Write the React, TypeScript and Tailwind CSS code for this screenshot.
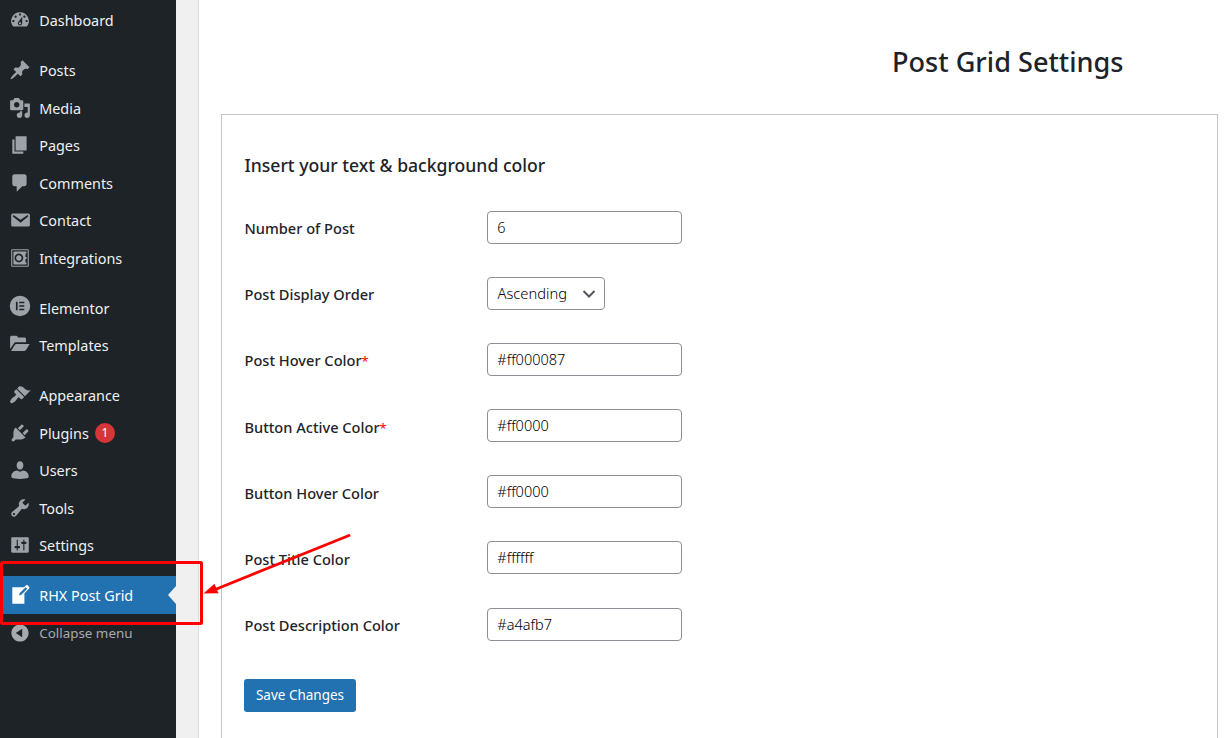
import React from "react";

type IconProps = { d: string };

function Dashicon({ d }: IconProps) {
  return (
    <svg viewBox="0 0 20 20" className="block size-[22px] shrink-0" fill="currentColor" fillRule="evenodd" aria-hidden="true">
      <path d={d} />
    </svg>
  );
}

const ICONS = {
  dashboard:
    "M3.76 16h12.48A7.998 7.998 0 0 0 10 3a7.998 7.998 0 0 0-6.24 13zM10 4c.55 0 1 .45 1 1s-.45 1-1 1-1-.45-1-1 .45-1 1-1zM6 6c.55 0 1 .45 1 1s-.45 1-1 1-1-.45-1-1 .45-1 1-1zm8 0c.55 0 1 .45 1 1s-.45 1-1 1-1-.45-1-1 .45-1 1-1zm-5.370 5.550L12 7v6c0 1.100-.900 2-2 2s-2-.900-2-2c0-.570.240-1.080.630-1.450zM4 10c.550 0 1 .450 1 1s-.450 1-1 1-1-.450-1-1 .450-1 1-1zm12 0c.550 0 1 .450 1 1s-.450 1-1 1-1-.450-1-1 .450-1 1-1zm-5 3c0-.550-.450-1-1-1s-1 .450-1 1 .450 1 1 1 1-.450 1-1z",
  post: "M10.440 3.020l1.820-1.820 6.360 6.350-1.830 1.820c-1.050-.680-2.480-.570-3.410.360l-.750.750c-.920.930-1.040 2.350-.350 3.410l-1.830 1.820-2.410-2.410-2.800 2.790c-.420.420-3.380 2.710-3.800 2.290s1.860-3.390 2.280-3.810l2.790-2.790L4.100 9.360l1.830-1.820c1.050.690 2.480.570 3.400-.360l.750-.750c.930-.920 1.050-2.350.360-3.410z",
  media:
    "M13 11V4c0-.55-.45-1-1-1h-1.670L9 1H5L3.670 3H2c-.55 0-1 .45-1 1v7c0 .55.45 1 1 1h10c.55 0 1-.45 1-1zM7 4.500c1.380 0 2.500 1.120 2.500 2.500S8.380 9.500 7 9.500 4.500 8.380 4.500 7 5.620 4.500 7 4.500zM14 6h5v10.500c0 1.380-1.120 2.500-2.500 2.500S14 17.880 14 16.500s1.120-2.500 2.500-2.500c.17 0 .34.020.5.050V9h-3V6zm-4 8.050V13h2v3.500c0 1.380-1.120 2.500-2.500 2.500S7 17.880 7 16.500 8.120 14 9.500 14c.17 0 .34.020.5.050z",
  page: "M6 15V2h10v13H6zm-1 1h8v2H3V5h2v11z",
  comments: "M5 2h9c1.100 0 2 .9 2 2v7c0 1.100-.9 2-2 2h-2l-5 5v-5H5c-1.100 0-2-.9-2-2V4c0-1.100.9-2 2-2z",
  email:
    "M3.870 4h13.250C18.370 4 19 4.590 19 5.790v8.420c0 1.190-.63 1.790-1.880 1.790H3.870c-1.250 0-1.880-.6-1.880-1.790V5.790c0-1.200.63-1.790 1.880-1.790zm6.620 8.600l6.740-5.530c.24-.2.43-.66.13-1.070-.29-.41-.82-.42-1.170-.17l-5.700 3.860L4.800 5.830c-.35-.25-.88-.24-1.170.17-.3.41-.11.870.13 1.070z",
  vault:
    "M18 17V3c0-.55-.45-1-1-1H3c-.55 0-1 .45-1 1v14c0 .55.45 1 1 1h14c.55 0 1-.45 1-1zm-1 0H3V3h14v14zM4.750 4h10.500c.41 0 .75.34.75.75V6h-1v3h1v2h-1v3h1v1.250c0 .41-.34.75-.75.75H4.750c-.41 0-.75-.34-.75-.75V4.750c0-.41.34-.75.75-.75zM13 10c0-2.210-1.790-4-4-4s-4 1.790-4 4 1.790 4 4 4 4-1.790 4-4zm-4-2.500c1.380 0 2.500 1.120 2.500 2.500S10.380 12.500 9 12.500 6.500 11.380 6.500 10 7.620 7.500 9 7.500z",
  elementor:
    "M10 .7a9.300 9.300 0 1 0 0 18.600A9.300 9.300 0 0 0 10 .7zM6.300 6.100h1.500v7.800H6.300zM9.300 6.100h4.600v1.500H9.300zM9.300 9.250h4.600v1.500H9.300zM9.300 12.400h4.600v1.500H9.300z",
  folder:
    "M1 14.600V4c0-.9.600-1.500 1.500-1.500h4c.6 0 1 .3 1.300.8l.5.900h5.500c1 0 1.700.6 1.700 1.600v2.700H6.600c-1 0-1.800.4-2.300 1.300zM1.900 16.300l3.300-5.300c.4-.6.900-.9 1.600-.9h12l-3 5c-.5.800-1.100 1.200-2 1.200z",
  appearance:
    "M14.480 11.060L7.410 3.990l1.500-1.500c.5-.56 2.300-.47 3.510.32 1.210.8 1.430 1.280 2.910 2.100 1.180.64 2.450 1.260 4.450.85zm-.71.71L6.700 4.700 4.930 6.470c-.39.39-.39 1.020 0 1.410l1.060 1.060c.39.39.39 1.030 0 1.420-.6.6-1.430 1.110-2.210 1.690-.35.26-.7.53-1.010.84C1.430 14.230.4 16.080 1.400 17.070c.99 1 2.840-.03 4.180-1.360.31-.31.58-.66.85-1.020.57-.78 1.080-1.610 1.690-2.210.39-.39 1.020-.39 1.410 0l1.060 1.060c.39.39 1.020.39 1.410 0z",
  plugins:
    "M13.110 4.360L9.870 7.600 8 5.730l3.240-3.240c.35-.34 1.050-.2 1.560.32.52.51.66 1.210.31 1.550zm-8 1.770l.91-1.120 9.010 9.010-1.190.84c-.71.71-2.630 1.160-3.820 1.160H6.140L4.900 17.260c-.59.59-1.540.59-2.120 0-.59-.58-.59-1.530 0-2.120l1.240-1.240v-3.880c0-1.130.4-3.190 1.090-3.890zm7.260 3.970l3.240-3.240c.34-.35 1.040-.21 1.550.31.52.51.66 1.210.31 1.550l-3.240 3.250z",
  users:
    "M10 9.600c-2.270 0-3-2.300-3.050-3.700C6.900 3.700 8.100 2 10 2s3.100 1.700 3.050 3.900C13 7.300 12.270 9.600 10 9.600zm0 2.100l2.600-1.300c2.900.3 5.200 2.400 5.200 4.600v1.900c-1.700.9-4.700 1.300-7.800 1.300s-6.100-.4-7.800-1.300V15c0-2.200 2.300-4.300 5.200-4.600z",
  tools:
    "M16.680 9.770c-1.340 1.340-3.300 1.670-4.950.99l-5.410 6.520c-.99.99-2.590.99-3.580 0s-.99-2.590 0-3.570l6.520-5.420c-.68-1.650-.35-3.610.99-4.950 1.280-1.280 3.120-1.620 4.720-1.060l-2.890 2.890 2.820 2.820 2.860-2.870c.53 1.580.18 3.390-1.080 4.650zM3.810 16.210c.4.39 1.040.39 1.430 0 .4-.4.4-1.040 0-1.430-.39-.4-1.030-.4-1.430 0-.39.39-.39 1.030 0 1.430z",
  settings:
    "M18 16V4c0-.55-.45-1-1-1H3c-.55 0-1 .45-1 1v12c0 .55.45 1 1 1h14c.55 0 1-.45 1-1zM8 11h1c.55 0 1 .45 1 1s-.45 1-1 1H8v1.500c0 .28-.22.5-.5.5s-.5-.22-.5-.5V13H6c-.55 0-1-.45-1-1s.45-1 1-1h1V5.500c0-.28.22-.5.5-.5s.5.22.5.5V11zm5-2h-1c-.55 0-1-.45-1-1s.45-1 1-1h1V5.500c0-.28.22-.5.5-.5s.5.22.5.5V7h1c.55 0 1 .45 1 1s-.45 1-1 1h-1v5.500c0 .28-.22.5-.5.5s-.5-.22-.5-.5V9z",
  write:
    "M16.890 1.200l1.410 1.410c.39.39.39 1.020 0 1.410L14 8.330V18H3V3h10.670l1.800-1.800c.4-.39 1.030-.4 1.420 0zm-5.660 8.480l5.370-5.360-1.420-1.420-5.360 5.370-.71 2.120z",
  collapse:
    "M10 2.160c4.330 0 7.840 3.510 7.840 7.840s-3.510 7.840-7.840 7.840S2.160 14.330 2.160 10 5.670 2.160 10 2.160zm2 11.720V6.120L6.180 9.970z",
};

type Item = { label: string; icon: string; lifted?: boolean; badge?: string; active?: boolean };

const GROUPS: Item[][] = [
  [{ label: "Dashboard", icon: ICONS.dashboard }],
  [
    { label: "Posts", icon: ICONS.post },
    { label: "Media", icon: ICONS.media },
    { label: "Pages", icon: ICONS.page },
    { label: "Comments", icon: ICONS.comments },
    { label: "Contact", icon: ICONS.email },
    { label: "Integrations", icon: ICONS.vault },
  ],
  [
    { label: "Elementor", icon: ICONS.elementor, lifted: true },
    { label: "Templates", icon: ICONS.folder, lifted: true },
  ],
  [
    { label: "Appearance", icon: ICONS.appearance },
    { label: "Plugins", icon: ICONS.plugins, badge: "1" },
    { label: "Users", icon: ICONS.users },
    { label: "Tools", icon: ICONS.tools },
    { label: "Settings", icon: ICONS.settings },
  ],
  [{ label: "RHX Post Grid", icon: ICONS.write, active: true }],
];

function MenuItem({ label, icon, lifted, badge, active }: Item) {
  return (
    <li
      className={
        active
          ? "flex h-[37.5px] items-center bg-[#2271b1] pl-[9px] text-white"
          : "flex h-[37.5px] items-center pl-[9px] text-[#f0f0f1]"
      }
    >
      <span className={`${active ? "text-white" : "text-[#9ca2a7]"} ${lifted ? "pb-[2px]" : "pt-px"}`}>
        <Dashicon d={icon} />
      </span>
      <span className="ml-[8.2px] pt-[2.8px] text-[14.4px] leading-5">{label}</span>
      {badge && (
        <span className="ml-[6px] mt-[2px] flex size-5 items-center justify-center rounded-full bg-[#d63638] text-xs text-white">
          {badge}
        </span>
      )}
      {active && (
        <svg viewBox="0 0 8 18" className="ml-auto h-[18px] w-[8px]" aria-hidden="true">
          <path d="M8 0v18L0 9z" fill="#f0f0f1" />
        </svg>
      )}
    </li>
  );
}

const FIELDS = [
  { label: "Number of Post", value: "6" },
  { label: "Post Display Order", value: "Ascending", select: true },
  { label: "Post Hover Color", value: "#ff000087", required: true },
  { label: "Button Active Color", value: "#ff0000", required: true },
  { label: "Button Hover Color", value: "#ff0000" },
  { label: "Post Title Color", value: "#ffffff" },
  { label: "Post Description Color", value: "#a4afb7" },
];

function Field({ label, value, select, required }: (typeof FIELDS)[number]) {
  return (
    <div className="flex h-[66.1px] items-start">
      <label className="w-[243px] pl-[0.5px] pt-[7.3px] text-[14.6px] font-medium leading-5">
        {label}
        {required && <span className="text-[13px] font-normal text-[#ff0000]">*</span>}
      </label>
      {select ? (
        <button
          type="button"
          className="flex h-[33px] w-[118px] items-center justify-between rounded-[4px] border border-[#8c8f94] pl-[9.5px] pr-2 text-[14.7px] font-light text-black"
        >
          <span className="pb-[2px]">{value}</span>
          <svg viewBox="0 0 14 14" className="size-[14px]" fill="none" stroke="#50575e" strokeWidth="2" aria-hidden="true">
            <path d="M1.500 4L7 9.500L12.500 4" />
          </svg>
        </button>
      ) : (
        <input
          defaultValue={value}
          className="h-[33px] w-[195px] rounded-[4px] border border-[#8c8f94] bg-white pb-px pl-[9.3px] text-[14.5px] font-light text-black"
        />
      )}
    </div>
  );
}

export default function App() {
  return (
    <div className="relative flex h-[738px] w-[1225px] overflow-hidden bg-[#f0f0f1] font-['Noto_Sans',sans-serif] text-[#1d2327]">
      <nav className="w-[176px] shrink-0 bg-[#1d2327] pt-px">
        <div className="flex flex-col gap-[12.5px]">
          {GROUPS.map((group, i) => (
            <ul key={i}>
              {group.map((item) => (
                <MenuItem key={item.label} {...item} />
              ))}
            </ul>
          ))}
        </div>
        <div className="flex h-[37.5px] items-center pl-[9px] pt-px text-[#a7aaad]">
          <Dashicon d={ICONS.collapse} />
          <span className="ml-[8.2px] text-[13.4px]">Collapse menu</span>
        </div>
      </nav>

      <main className="ml-[22px] flex flex-1 flex-col border-l border-[#dcdcde] bg-white pl-[22px]">
        <h1 className="flex h-[114px] shrink-0 items-center pl-[671px] pt-[10px] text-[27.1px] font-medium leading-9">
          Post Grid Settings
        </h1>
        <section className="w-[997px] flex-1 border border-b-0 border-[#c3c4c7] pl-[22px] pt-[38px]">
          <h2 className="mb-[34px] pl-[0.5px] text-[17.6px] font-medium leading-6">
            Insert your text &amp; background color
          </h2>
          <form>
            {FIELDS.map((f) => (
              <Field key={f.label} {...f} />
            ))}
            <button
              type="button"
              className="mt-[5.3px] h-[33px] w-[112px] rounded-[3px] bg-[#2271b1] text-[13.5px] text-white"
            >
              Save Changes
            </button>
          </form>
        </section>
      </main>

      <svg viewBox="0 0 360 110" className="pointer-events-none absolute left-0 top-[530px] h-[110px] w-[360px]" aria-hidden="true">
        <rect x="1.500" y="32.500" width="200" height="61" rx="1" fill="none" stroke="#f00" strokeWidth="3" />
        <path d="M349 5.500L214 60" stroke="#f00" strokeWidth="2.800" strokeLinecap="round" />
        <path d="M203.500 63.500L214.500 53.800L218.500 63.200z" fill="#f00" />
      </svg>
    </div>
  );
}
